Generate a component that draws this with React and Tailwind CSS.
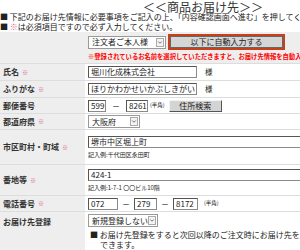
import { ChevronDown } from 'lucide-react';

const jp = { fontFamily: '"Noto Sans CJK JP", "Noto Sans", sans-serif' };

function Req() {
  return <span className="ml-[3px] text-[6px] text-[#e0608a]">※</span>;
}

function Label({ children, req, className = '' }) {
  return (
    <div className={`w-[85px] shrink-0 bg-[#eeeeee] pl-[3px] flex items-center text-[8px] font-bold text-[#333] ${className}`}>
      {children}
      {req && <Req />}
    </div>
  );
}

function Input({ value, className = '' }) {
  return (
    <div className={`h-[12px] bg-white border border-[#8a8a8a] border-t-[#555] border-l-[#555] pl-[2px] text-[8px] leading-[10px] text-[#222] whitespace-nowrap overflow-hidden ${className}`}>
      {value}
    </div>
  );
}

function Select({ value, className = '' }) {
  return (
    <div className={`h-[13px] bg-white border border-[#9a9a9a] flex items-center justify-between pl-[3px] pr-[1px] text-[8px] text-[#222] ${className}`}>
      <span className="whitespace-nowrap">{value}</span>
      <span className="w-[8px] h-[9px] border border-[#aaa] bg-[#f4f4f4] flex items-center justify-center">
        <ChevronDown size={7} strokeWidth={3} className="text-[#444]" />
      </span>
    </div>
  );
}

export default function App() {
  return (
    <div style={jp} className="w-[300px] h-[250px] overflow-hidden bg-white text-[#222]">
      {/* 見出し */}
      <div className="h-[12px] pl-[143px] text-[12px] leading-[13px] whitespace-nowrap text-[#333]">＜＜商品お届け先＞＞</div>
      <div className="text-[8px] leading-[10px] whitespace-nowrap">■ 下記のお届け先情報に必要事項をご記入の上、「内容確認画面へ進む」を押してください。</div>
      <div className="text-[8px] leading-[10px] whitespace-nowrap">■ <span className="text-[#e0608a]">※</span>は必須項目ですので必ず入力してください。</div>

      {/* 自動入力 */}
      <div className="h-[31px] bg-[#eeeeee] pl-[88px] pt-[2px]">
        <div className="flex items-center">
          <Select value="注文者ご本人様" className="w-[78px]" />
          <div className="ml-[2px] border-2 border-[#c8401a]">
            <div className="w-[113px] h-[12px] bg-[#d6d6d6] border border-[#666] flex items-center justify-center text-[8px] text-[#222]">以下に自動入力する</div>
          </div>
        </div>
        <div className="mt-[2px] text-[6.3px] font-bold text-[#ff0000] whitespace-nowrap">※登録されているお名前を選択していただきますと、お届け先情報を自動入力します。</div>
      </div>

      <div className="border-t border-[#dddddd]">
        {/* 氏名 */}
        <div className="flex h-[17px] border-b border-[#dddddd]">
          <Label req>氏名</Label>
          <div className="flex-1 flex items-center pl-[3px]">
            <Input value="堀川化成株式会社" className="w-[109px]" />
            <span className="ml-[8px] text-[7.5px]">様</span>
          </div>
        </div>
        {/* ふりがな */}
        <div className="flex h-[17px] border-b border-[#dddddd]">
          <Label req>ふりがな</Label>
          <div className="flex-1 flex items-center pl-[3px]">
            <Input value="ほりかわかせいかぶしきがいしゃ" className="w-[109px]" />
            <span className="ml-[8px] text-[7.5px]">様</span>
          </div>
        </div>
        {/* 郵便番号 */}
        <div className="flex h-[16px] border-b border-[#dddddd]">
          <Label>郵便番号</Label>
          <div className="flex-1 flex items-center pl-[3px]">
            <Input value="599" className="w-[18px]" />
            <span className="mx-[6px] text-[8px]">－</span>
            <Input value="8261" className="w-[22px]" />
            <span className="ml-[2px] text-[5.5px]">(半角)</span>
            <div className="ml-[4px] w-[53px] h-[12px] bg-[#d4d4d4] border border-[#f4f4f4] border-r-[#555] border-b-[#555] flex items-center justify-center text-[8px]">住所検索</div>
          </div>
        </div>
        {/* 都道府県 */}
        <div className="flex h-[16px] border-b border-[#dddddd]">
          <Label req>都道府県</Label>
          <div className="flex-1 flex items-center pl-[3px]">
            <Select value="大阪府" className="w-[52px]" />
          </div>
        </div>
        {/* 市区町村・町域 */}
        <div className="flex h-[35px] border-b border-[#dddddd]">
          <Label req>市区町村・町域</Label>
          <div className="flex-1 flex flex-col justify-center pl-[3px]">
            <Input value="堺市中区堀上町" className="w-[260px]" />
            <div className="mt-[3px] text-[6px] leading-[8px] whitespace-nowrap">記入例:千代田区永田町</div>
          </div>
        </div>
        {/* 番地等 */}
        <div className="flex h-[31px] border-b border-[#dddddd]">
          <Label req>番地等</Label>
          <div className="flex-1 flex flex-col justify-center pl-[3px]">
            <Input value="424-1" className="w-[260px]" />
            <div className="mt-[3px] text-[6px] leading-[8px] whitespace-nowrap">記入例:1-7-1 〇〇ビル10階</div>
          </div>
        </div>
        {/* 電話番号 */}
        <div className="flex h-[16px] border-b border-[#dddddd]">
          <Label req>電話番号</Label>
          <div className="flex-1 flex items-center pl-[3px]">
            <Input value="072" className="w-[30px]" />
            <span className="mx-[4px] text-[8px]">－</span>
            <Input value="279" className="w-[23px]" />
            <span className="mx-[4px] text-[8px]">－</span>
            <Input value="8172" className="w-[25px]" />
            <span className="ml-[6px] text-[5.5px]">(半角)</span>
          </div>
        </div>
        {/* お届け先登録 */}
        <div className="flex h-[40px]">
          <Label className="items-start pt-[4px]">お届け先登録</Label>
          <div className="flex-1 pl-[3px] pt-[2px]">
            <Select value="新規登録しない" className="w-[70px]" />
            <div className="mt-[3px] text-[8px] leading-[10px] pl-[2px] whitespace-nowrap">■ お届け先登録をすると次回以降のご注文時にお届け先を選択</div>
            <div className="text-[8px] leading-[10px] pl-[12px]">できます。</div>
          </div>
        </div>
      </div>
    </div>
  );
}
